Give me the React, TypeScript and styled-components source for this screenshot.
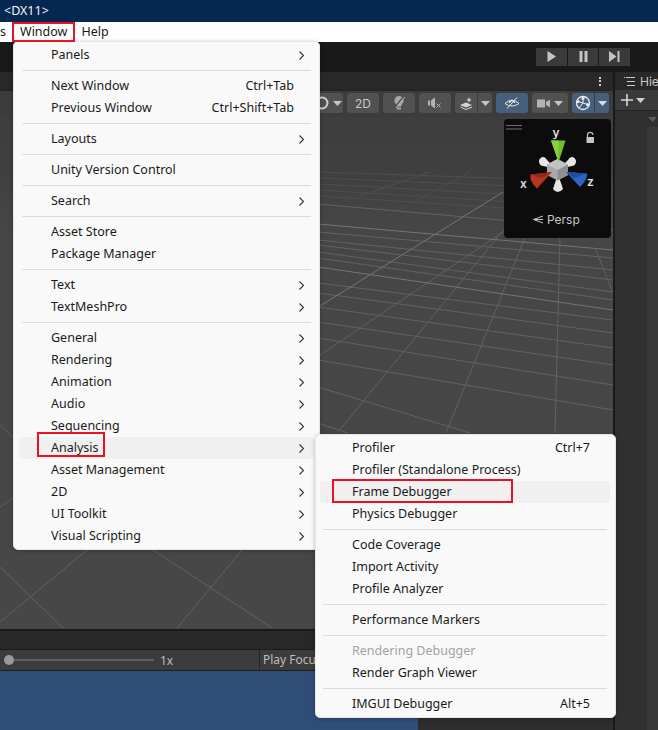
import styled, { createGlobalStyle } from "styled-components";

const GlobalStyle = createGlobalStyle`
  html, body {
    margin: 0;
    padding: 0;
    background: #2d2d2d;
  }
`;

const Page = styled.div`
  position: relative;
  width: 658px;
  height: 730px;
  overflow: hidden;
  display: flex;
  flex-direction: column;
  font-family: "Noto Sans", "Noto Sans CJK SC", sans-serif;
`;

const TitleBar = styled.div`
  height: 22px;
  flex: none;
  background: #06274f;
  color: #f2f5f9;
  font-size: 12.5px;
  line-height: 22px;
  padding-left: 4px;
`;

const MenuBar = styled.div`
  height: 20px;
  flex: none;
  background: #fff;
  display: flex;
  gap: 14px;
  align-items: center;
  font-size: 12.5px;
  color: #1a1a1a;
  margin-bottom: -1px;
  padding-bottom: 1px;
  box-sizing: border-box;
  position: relative;
`;

const MenuBarItem = styled.span<{ $clip?: boolean }>`
  width: ${(p) => (p.$clip ? "6px" : "auto")};
`;

const PlayBar = styled.div`
  height: 31px;
  flex: none;
  background: #191919;
  display: flex;
  align-items: center;
  justify-content: flex-end;
  gap: 1px;
  padding-right: 28px;
`;

const PlayButton = styled.div`
  width: 30.67px;
  height: 18px;
  background: #3a3a3a;
  display: flex;
  align-items: center;
  justify-content: center;
  color: #c4c4c4;
`;

const Workspace = styled.div`
  flex: 1;
  min-height: 0;
  display: flex;
`;

const LeftColumn = styled.div`
  width: 613px;
  flex: none;
  display: flex;
  flex-direction: column;
`;

const TabStrip = styled.div`
  height: 18px;
  flex: none;
  background: #282828;
  display: flex;
  align-items: center;
  justify-content: flex-end;
  padding-right: 12px;
`;

const Kebab = styled.div`
  display: flex;
  flex-direction: column;
  gap: 1.5px;
  > i {
    width: 2px;
    height: 2px;
    background: #d0d0d0;
    display: block;
  }
`;

const SceneToolbar = styled.div`
  height: 27px;
  flex: none;
  box-sizing: border-box;
  background: #3c3c3c;
  border-top: 1px solid #232323;
  display: flex;
  align-items: center;
  justify-content: flex-end;
  gap: 4px;
  padding: 0 4px 2px 0;
`;

const ToolButton = styled.div<{ $w: number; $active?: boolean }>`
  width: ${(p) => p.$w}px;
  height: 20px;
  flex: none;
  border-radius: 3px;
  background: ${(p) => (p.$active ? "#46607c" : "#515151")};
  color: #c9c9c9;
  font-size: 12px;
  font-family: Inter, sans-serif;
  display: flex;
  align-items: center;
  justify-content: center;
  gap: 4px;
`;

const SplitButton = styled.div`
  display: flex;
  gap: 1px;
  flex: none;
`;

const SplitPart = styled(ToolButton)<{ $right?: boolean }>`
  border-radius: ${(p) => (p.$right ? "0 3px 3px 0" : "3px 0 0 3px")};
`;

const SceneView = styled.div`
  flex: 1;
  min-height: 0;
  background: linear-gradient(#3e3e3e 0, #3f3f3f 10%, #464646 22%, #474747 100%);
  > svg {
    display: block;
  }
`;

const GameTabs = styled.div`
  height: 21px;
  flex: none;
  box-sizing: border-box;
  background: #282828;
  border-top: 2px solid #1a1a1a;
  border-bottom: 1px solid #1c1c1c;
`;

const GameToolbar = styled.div`
  height: 21px;
  flex: none;
  box-sizing: border-box;
  background: #3c3c3c;
  border-bottom: 1px solid #1e1e1e;
  display: flex;
  align-items: center;
  font-size: 12px;
  color: #bdbdbd;
`;

const ScaleSlider = styled.div`
  width: 150px;
  height: 2px;
  margin-left: 4px;
  background: #5f5f5f;
  position: relative;
  flex: none;
  &::before {
    content: "";
    position: absolute;
    left: 0;
    top: -4px;
    width: 10px;
    height: 10px;
    border-radius: 50%;
    background: #999;
  }
`;

const ScaleLabel = styled.span`
  width: 105px;
  flex: none;
  padding-left: 6px;
  box-sizing: border-box;
`;

const PlayFocus = styled.span`
  border-left: 1px solid #262626;
  padding-left: 3px;
  height: 100%;
  line-height: 20px;
  white-space: nowrap;
`;

const GameArea = styled.div`
  height: 59px;
  flex: none;
  background: #2d2d2d;
`;

const GameBlue = styled.div`
  width: 418px;
  height: 100%;
  background: #304d78;
`;

const Hierarchy = styled.div`
  flex: 1;
  min-width: 0;
  border-left: 2px solid #191919;
  display: flex;
  flex-direction: column;
  overflow: hidden;
`;

const HierarchyTab = styled.div`
  height: 18px;
  flex: none;
  background: #282828;
  color: #c8c8c8;
  font-size: 12px;
  font-family: Inter, sans-serif;
  display: flex;
  align-items: center;
  gap: 5px;
  padding-left: 9px;
`;

const HierarchyTools = styled.div`
  height: 20px;
  flex: none;
  background: #3a3a3a;
  display: flex;
  align-items: center;
  gap: 3px;
  padding-left: 6px;
  color: #d8d8d8;
`;

const HierarchyHead = styled.div`
  height: 17px;
  flex: none;
  box-sizing: border-box;
  background: #2f2f2f;
  border-top: 1px solid #232323;
  display: flex;
  align-items: center;
  justify-content: flex-end;
  padding-right: 1px;
`;

const HierarchyBody = styled.div`
  flex: 1;
  display: flex;
`;

const HierarchyList = styled.div`
  flex: 1;
  background: #303030;
`;

const HierarchyScroll = styled.div`
  width: 11px;
  background: #383838;
`;

const Gizmo = styled.div`
  position: absolute;
  left: 504px;
  top: 119px;
  width: 107px;
  height: 119px;
  border-radius: 4px;
  background: #0c0c0c;
  > svg {
    display: block;
  }
`;

const Menu = styled.div<{ $left: number; $top: number; $width: number; $inset: number }>`
  position: absolute;
  left: ${(p) => p.$left}px;
  top: ${(p) => p.$top}px;
  width: ${(p) => p.$width}px;
  box-sizing: border-box;
  padding: 2px 5px 2px ${(p) => p.$inset}px;
  background: #f9f9f9;
  border: 1px solid #e6e6e6;
  border-radius: 5px;
  box-shadow: 0 1px 4px rgba(0, 0, 0, 0.25);
  font-size: 12.5px;
  color: #1a1a1a;
`;

const Row = styled.div<{ $hover?: boolean; $off?: boolean }>`
  height: 22px;
  box-sizing: border-box;
  display: flex;
  align-items: center;
  justify-content: space-between;
  padding: 0 20px 1px 32px;
  position: relative;
  border-radius: 4px;
  background: ${(p) => (p.$hover ? "#f0f0f0" : "transparent")};
  color: ${(p) => (p.$off ? "#a3a3a3" : "#1a1a1a")};
`;

const Chevron = styled.svg`
  position: absolute;
  right: 10px;
  top: 7px;
`;

const Separator = styled.div`
  height: 1px;
  margin: 4px 3px;
  background: #dcdcdc;
`;

const RedBox = styled.div<{ $x: number; $y: number; $w: number; $h: number }>`
  position: absolute;
  left: ${(p) => p.$x}px;
  top: ${(p) => p.$y}px;
  width: ${(p) => p.$w}px;
  height: ${(p) => p.$h}px;
  box-sizing: border-box;
  border: 2px solid #e81224;
`;

type Item = { label?: string; sub?: boolean; key?: string; hover?: boolean; off?: boolean };

const windowMenu: Item[] = [
  { label: "Panels", sub: true },
  {},
  { label: "Next Window", key: "Ctrl+Tab" },
  { label: "Previous Window", key: "Ctrl+Shift+Tab" },
  {},
  { label: "Layouts", sub: true },
  {},
  { label: "Unity Version Control" },
  {},
  { label: "Search", sub: true },
  {},
  { label: "Asset Store" },
  { label: "Package Manager" },
  {},
  { label: "Text", sub: true },
  { label: "TextMeshPro", sub: true },
  {},
  { label: "General", sub: true },
  { label: "Rendering", sub: true },
  { label: "Animation", sub: true },
  { label: "Audio", sub: true },
  { label: "Sequencing", sub: true },
  { label: "Analysis", sub: true, hover: true },
  { label: "Asset Management", sub: true },
  { label: "2D", sub: true },
  { label: "UI Toolkit", sub: true },
  { label: "Visual Scripting", sub: true },
];

const analysisMenu: Item[] = [
  { label: "Profiler", key: "Ctrl+7" },
  { label: "Profiler (Standalone Process)" },
  { label: "Frame Debugger", hover: true },
  { label: "Physics Debugger" },
  {},
  { label: "Code Coverage" },
  { label: "Import Activity" },
  { label: "Profile Analyzer" },
  {},
  { label: "Performance Markers" },
  {},
  { label: "Rendering Debugger", off: true },
  { label: "Render Graph Viewer" },
  {},
  { label: "IMGUI Debugger", key: "Alt+5" },
];

// x1 y1 x2 y2 in page coordinates
const minorLines = [
  [318, 283, 613, 320], [318, 293, 613, 333], [318, 307, 613, 348], [318, 322, 613, 365],
  [318, 338, 613, 385], [318, 360, 613, 410], [318, 387, 470, 433], [318, 423, 348, 433],
  [318, 258, 613, 300], [318, 252, 613, 292], [318, 245, 613, 280], [318, 232, 613, 258],
  [318, 240, 613, 270], [318, 204, 613, 230], [338, 432, 510, 222], [446, 433, 530, 225],
  [555, 433, 560, 237], [320, 355, 503, 232], [596, 250, 613, 293], [0, 567, 63, 628],
  [0, 622, 87, 550], [153, 550, 272, 628], [242, 550, 177, 628], [0, 425, 13, 437],
  [0, 507, 13, 498],
];

const faintLines = [
  [318, 196, 613, 215], [318, 190, 613, 208], [318, 184, 613, 200], [318, 178, 613, 190],
  [318, 172, 613, 182], [430, 172, 360, 196], [470, 172, 380, 220],
];

const majorLines = [
  [318, 267, 613, 310], [318, 224, 613, 250], [320, 306, 503, 192],
];

function SceneGrid() {
  return (
    <svg width="613" height="512" viewBox="0 117 613 512">
      {faintLines.map((l, i) => (
        <line key={i} x1={l[0]} y1={l[1]} x2={l[2]} y2={l[3]} stroke="#4e4e4e" />
      ))}
      {minorLines.map((l, i) => (
        <line key={i} x1={l[0]} y1={l[1]} x2={l[2]} y2={l[3]} stroke="#626262" />
      ))}
      {majorLines.map((l, i) => (
        <line key={i} x1={l[0]} y1={l[1]} x2={l[2]} y2={l[3]} stroke="#757575" />
      ))}
    </svg>
  );
}

function DropArrow({ color = "#c4c4c4" }: { color?: string }) {
  return (
    <svg width="9" height="5" viewBox="0 0 9 5" style={{ flex: "none" }}>
      <path d="M0 0h9L4.5 5z" fill={color} />
    </svg>
  );
}

function MenuRows({ items }: { items: Item[] }) {
  return (
    <>
      {items.map((item, i) =>
        item.label ? (
          <Row key={i} $hover={item.hover} $off={item.off}>
            <span>{item.label}</span>
            {item.key && <span>{item.key}</span>}
            {item.sub && (
              <Chevron width="5" height="9" viewBox="0 0 5 9">
                <path d="M0.5 0.5L4.5 4.5L0.5 8.5" fill="none" stroke="#333" strokeWidth="1.1" />
              </Chevron>
            )}
          </Row>
        ) : (
          <Separator key={i} />
        )
      )}
    </>
  );
}

function GizmoDrawing() {
  return (
    <svg width="107" height="119" viewBox="0 0 107 119" fontFamily="Inter, sans-serif">
      <path d="M2 6.5h16M2 10h16" stroke="#6e6e6e" />
      {/* lock */}
      <path d="M83.5 18v-2a2.7 2.7 0 0 1 5.4 0" fill="none" stroke="#bdbdbd" strokeWidth="1.2" />
      <rect x="82.5" y="18" width="7.5" height="6" fill="#c4c4c4" />
      <text x="52" y="18" textAnchor="middle" fontSize="12" fontWeight="600" fill="#e0e0e0">y</text>
      <text x="19.5" y="69" textAnchor="middle" fontSize="12" fontWeight="600" fill="#e0e0e0">x</text>
      <text x="86.5" y="67" textAnchor="middle" fontSize="12" fontWeight="600" fill="#e0e0e0">z</text>
      {/* white cones */}
      <path d="M52 50L37 46.5Q33 42.5 37 38.5Q41 37 43 41z" fill="#e6e6e6" />
      <path d="M55 50L70 46.5Q74 42.5 70 38.5Q66 37 64 41z" fill="#e6e6e6" />
      <path d="M54 55L49 70Q53.5 76 59 70z" fill="#e6e6e6" />
      {/* cube */}
      <path d="M53.5 40L64 45.5V56L53.5 61.5L43 56V45.5z" fill="#a9a9a9" />
      <path d="M53.5 51L64 45.5V56L53.5 61.5z" fill="#8f8f8f" />
      <path d="M53.5 40L64 45.5L53.5 51L43 45.5z" fill="#c2c2c2" />
      {/* axes */}
      <path d="M47 21.5H61.5L54.7 43z" fill="#6fbf2e" />
      <path d="M47 21.5H54.5V43z" fill="#86d23c" />
      <path d="M48 53L26.5 55.5Q25 62 33 69.5z" fill="#b8341f" />
      <path d="M48 53L26.5 55.5Q33 57.5 38 59z" fill="#8f2a1a" />
      <path d="M62 53L83 54.5Q84 60 76 68z" fill="#2f63c8" />
      <path d="M62 53L83 54.5Q76 57 70 59z" fill="#234c9c" />
      <path d="M39 97L29.5 100.5L39 104" fill="none" stroke="#c8c8c8" />
      <path d="M29.5 100.5H39" stroke="#c8c8c8" />
      <text x="43" y="105" fontSize="12" fill="#c8c8c8">Persp</text>
    </svg>
  );
}

export default function App() {
  return (
    <Page>
      <GlobalStyle />
      <TitleBar>{"<DX11>"}</TitleBar>
      <MenuBar>
        <MenuBarItem $clip>s</MenuBarItem>
        <MenuBarItem>Window</MenuBarItem>
        <MenuBarItem>Help</MenuBarItem>
      </MenuBar>
      <PlayBar>
        <PlayButton>
          <svg width="9" height="11" viewBox="0 0 9 11">
            <path d="M0.5 0L9 5.5L0.5 11z" fill="currentColor" />
          </svg>
        </PlayButton>
        <PlayButton>
          <svg width="9" height="11" viewBox="0 0 9 11">
            <path d="M0.5 0h3v11h-3zM5.5 0h3v11h-3z" fill="currentColor" />
          </svg>
        </PlayButton>
        <PlayButton>
          <svg width="11" height="11" viewBox="0 0 11 11">
            <path d="M0 0L7.5 5.5L0 11zM8.5 0h2v11h-2z" fill="currentColor" />
          </svg>
        </PlayButton>
      </PlayBar>
      <Workspace>
        <LeftColumn>
          <TabStrip>
            <Kebab>
              <i />
              <i />
              <i />
            </Kebab>
          </TabStrip>
          <SceneToolbar>
            <ToolButton $w={30}>
              <svg width="14" height="14" viewBox="0 0 14 14" style={{ flex: "none" }}>
                <circle cx="7" cy="7" r="5.5" fill="none" stroke="#d0d0d0" strokeWidth="2" />
              </svg>
              <DropArrow />
            </ToolButton>
            <ToolButton $w={32}>2D</ToolButton>
            <ToolButton $w={32}>
              <svg width="14" height="16" viewBox="0 0 14 16">
                <path d="M7 1a4.6 4.6 0 0 0-3 8l1 2.5h4l1-2.5a4.6 4.6 0 0 0-3-8z" fill="#a8a8a8" />
                <rect x="5" y="12.5" width="4" height="2" fill="#a8a8a8" />
                <path d="M3 12L12 1" stroke="#515151" strokeWidth="1.4" />
                <path d="M4 13L13 2" stroke="#b4b4b4" />
              </svg>
            </ToolButton>
            <ToolButton $w={32}>
              <svg width="14" height="12" viewBox="0 0 14 12">
                <path d="M0 3.5h2v5H0zM3 3.5L7 0.5v11L3 8.5z" fill="#b4b4b4" />
                <path d="M8.5 6.5l4 4M12.5 6.5l-4 4" stroke="#b4b4b4" />
              </svg>
            </ToolButton>
            <SplitButton>
              <SplitPart $w={22}>
                <svg width="13" height="13" viewBox="0 0 13 13">
                  <path d="M0 8L6 5.5L12 8L6 10.5z" fill="#d4d4d4" />
                  <path d="M0.5 10L6 12.5L12 10" fill="none" stroke="#d4d4d4" />
                  <path d="M9 0l.8 2.2 2.2.8-2.2.8L9 6l-.8-2.2L6 3l2.2-.8z" fill="#d4d4d4" />
                </svg>
              </SplitPart>
              <SplitPart $w={14} $right>
                <DropArrow />
              </SplitPart>
            </SplitButton>
            <ToolButton $w={32} $active>
              <svg width="16" height="12" viewBox="0 0 16 12">
                <path d="M1 6.5Q8 0 15 6.5Q8 11.5 1 6.5z" fill="none" stroke="#e6e6e6" />
                <path d="M5.5 6a2.5 2.5 0 0 1 5 0" fill="none" stroke="#e6e6e6" strokeWidth="1.4" />
                <path d="M3 11.5L13 0.5" stroke="#e6e6e6" />
              </svg>
            </ToolButton>
            <ToolButton $w={36}>
              <svg width="13" height="9" viewBox="0 0 13 9" style={{ flex: "none" }}>
                <rect x="0" y="0.5" width="8" height="8" fill="#b4b4b4" />
                <path d="M9 3L13 0.5V8.5L9 6z" fill="#b4b4b4" />
              </svg>
              <DropArrow />
            </ToolButton>
            <SplitButton>
              <SplitPart $w={22} $active>
                <svg width="16" height="16" viewBox="0 0 16 16">
                  <circle cx="8" cy="8" r="6.5" fill="none" stroke="#eee" strokeWidth="1.3" />
                  <path d="M8 1.5V8M1.8 6L8 8L14 10M8 8L4 13" stroke="#eee" />
                  <circle cx="8" cy="3.5" r="1.5" fill="#eee" />
                  <circle cx="3" cy="6.5" r="1.5" fill="#eee" />
                  <circle cx="12.5" cy="9.5" r="1.5" fill="#eee" />
                </svg>
              </SplitPart>
              <SplitPart $w={14} $active $right>
                <DropArrow color="#d8dee6" />
              </SplitPart>
            </SplitButton>
          </SceneToolbar>
          <SceneView>
            <SceneGrid />
          </SceneView>
          <GameTabs />
          <GameToolbar>
            <ScaleSlider />
            <ScaleLabel>1x</ScaleLabel>
            <PlayFocus>Play Focus</PlayFocus>
          </GameToolbar>
          <GameArea>
            <GameBlue />
          </GameArea>
        </LeftColumn>
        <Hierarchy>
          <HierarchyTab>
            <svg width="11" height="9" viewBox="0 0 11 9" style={{ flex: "none" }}>
              <path d="M2 0.5h9M3 4.5h8M3 8.5h8" stroke="#c8c8c8" />
              <rect x="0" y="0" width="1" height="1" fill="#c8c8c8" />
            </svg>
            <span>Hie</span>
          </HierarchyTab>
          <HierarchyTools>
            <svg width="12" height="12" viewBox="0 0 12 12" style={{ flex: "none" }}>
              <path d="M6 0V12M0 6H12" stroke="currentColor" strokeWidth="1.6" />
            </svg>
            <DropArrow color="#d0d0d0" />
          </HierarchyTools>
          <HierarchyHead>
            <DropArrow color="#5c5c5c" />
          </HierarchyHead>
          <HierarchyBody>
            <HierarchyList />
            <HierarchyScroll />
          </HierarchyBody>
        </Hierarchy>
      </Workspace>
      <Gizmo>
        <GizmoDrawing />
      </Gizmo>
      <Menu $left={13} $top={41} $width={307} $inset={5}>
        <MenuRows items={windowMenu} />
      </Menu>
      <Menu $left={315} $top={434} $width={301} $inset={4}>
        <MenuRows items={analysisMenu} />
      </Menu>
      <RedBox $x={12} $y={22} $w={63} $h={20} />
      <RedBox $x={37} $y={432} $w={68} $h={25} />
      <RedBox $x={332} $y={479} $w={181} $h={24} />
    </Page>
  );
}
